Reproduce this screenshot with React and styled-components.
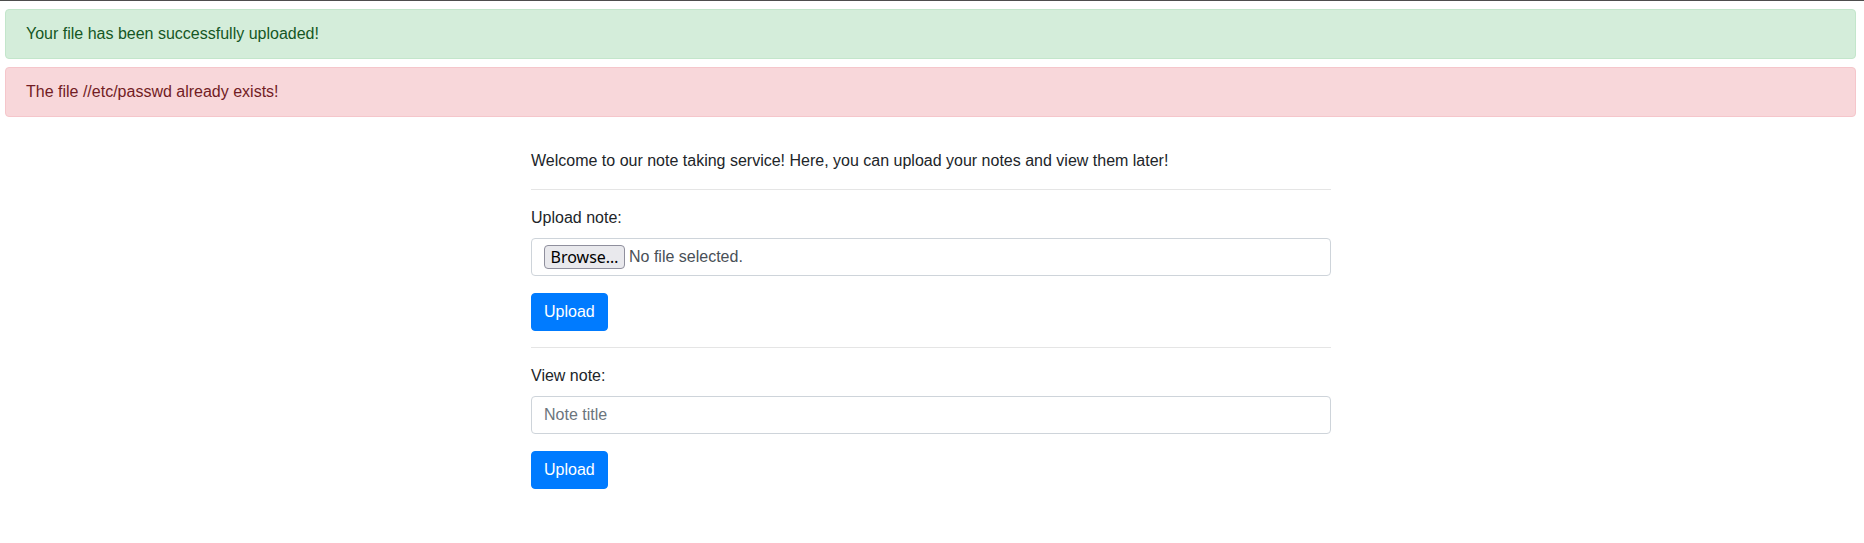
import styled, { createGlobalStyle } from "styled-components";

const GlobalStyle = createGlobalStyle`
  * { box-sizing: border-box; }
  html, body { margin: 0; padding: 0; background: #fff; }
  body {
    font-family: "Liberation Sans", Arial, sans-serif;
    font-size: 16px;
    line-height: 24px;
    color: #212529;
  }
`;

const TopRule = styled.div`
  height: 1px;
  background: #4d4d4d;
`;

const Alerts = styled.div`
  display: flex;
  flex-direction: column;
  gap: 8px;
  margin: 8px 8px 0 5px;
`;

const Alert = styled.div`
  padding: 12px 20px;
  border: 1px solid ${(p) => (p.$kind === "danger" ? "#f5c6cb" : "#c3e6cb")};
  border-radius: 4px;
  background: ${(p) => (p.$kind === "danger" ? "#f8d7da" : "#d4edda")};
  color: ${(p) => (p.$kind === "danger" ? "#721c24" : "#155724")};
`;

const Container = styled.main`
  width: 802px;
  margin: 32px auto 0;
  padding-right: 2px;
`;

const Intro = styled.p`
  margin: 0;
`;

const Rule = styled.hr`
  margin: 16px 0;
  border: 0;
  border-top: 1px solid rgba(0, 0, 0, 0.1);
`;

const Group = styled.form`
  display: flex;
  flex-direction: column;
  align-items: flex-start;
`;

const Label = styled.label`
  margin-bottom: 8px;
`;

const Field = styled.div`
  width: 100%;
  height: 38px;
  display: flex;
  align-items: center;
  padding: 0 12px;
  border: 1px solid #ced4da;
  border-radius: 4px;
  background: #fff;
  color: #495057;
  margin-bottom: 17px;
`;

const BrowseButton = styled.span`
  display: inline-flex;
  align-items: center;
  justify-content: center;
  width: 81px;
  height: 24px;
  margin-right: 4px;
  border: 1px solid #8f8f9d;
  border-radius: 4px;
  background: #e9e9ed;
  color: #000;
  font-family: "Noto Sans", "DejaVu Sans", sans-serif;
  font-size: 16px;
  white-space: nowrap;
`;

const TextInput = styled.input`
  width: 100%;
  height: 38px;
  padding: 6px 12px;
  border: 1px solid #ced4da;
  border-radius: 4px;
  font: inherit;
  color: #495057;
  margin-bottom: 17px;
  outline: none;
  &::placeholder { color: #6c757d; }
`;

const Button = styled.button`
  height: 38px;
  padding: 6px 12px;
  border: 1px solid #007bff;
  border-radius: 4px;
  background: #007bff;
  color: #fff;
  font: inherit;
  cursor: pointer;
`;

export default function App() {
  return (
    <>
      <GlobalStyle />
      <TopRule />
      <Alerts>
        <Alert $kind="success">Your file has been successfully uploaded!</Alert>
        <Alert $kind="danger">The file //etc/passwd already exists!</Alert>
      </Alerts>
      <Container>
        <Intro>
          Welcome to our note taking service! Here, you can upload your notes and view them later!
        </Intro>
        <Rule />
        <Group onSubmit={(e) => e.preventDefault()}>
          <Label>Upload note:</Label>
          <Field>
            <BrowseButton>Browse…</BrowseButton>
            No file selected.
          </Field>
          <Button type="submit">Upload</Button>
        </Group>
        <Rule />
        <Group onSubmit={(e) => e.preventDefault()}>
          <Label>View note:</Label>
          <TextInput placeholder="Note title" />
          <Button type="submit">Upload</Button>
        </Group>
      </Container>
    </>
  );
}
